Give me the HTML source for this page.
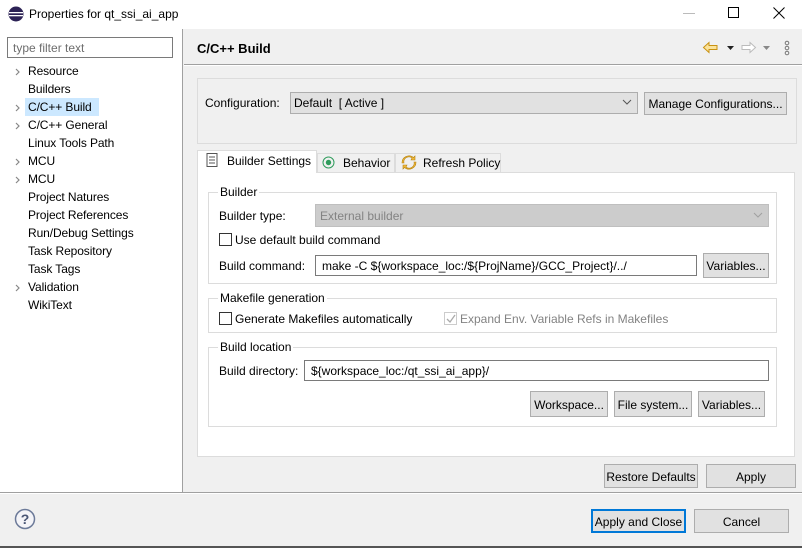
<!DOCTYPE html>
<html><head><style>
*{box-sizing:border-box;margin:0;padding:0}
body{width:802px;height:548px;background:#f0f0f0;font-family:"Liberation Sans",sans-serif;font-size:12px;color:#000;position:relative;overflow:hidden}
.a{position:absolute;white-space:nowrap}
.btn{position:absolute;background:#e1e1e1;border:1px solid #adadad;text-align:center;font-size:12px}
.grp{position:absolute;border:1px solid #dcdcdc}
.lg{position:absolute;background:#fff;padding:0 2px;top:-8px;left:8px}
.cb{position:absolute;width:13px;height:13px;border:1px solid #333;background:#fff}
.inp{position:absolute;background:#fff;border:1px solid #7a7a7a;padding-left:6px}
.tree div{position:absolute;left:28px;letter-spacing:-0.1px}
.arr{position:absolute;left:14px}
</style></head><body>
<div class="a" style="left:0;top:0;width:802px;height:29px;background:#fff"></div>
<svg class="a" style="left:8px;top:6px" width="16" height="16"><circle cx="8" cy="8" r="7.5" fill="#2c2255"/><rect x="1" y="6" width="14" height="1.3" fill="#fff"/><rect x="1" y="9" width="14" height="1.3" fill="#fff"/></svg>
<div class="a" style="left:29px;top:7px">Properties for qt_ssi_ai_app</div>
<div class="a" style="left:683px;top:13px;width:12px;height:1px;background:#bbb"></div>
<div class="a" style="left:728px;top:7px;width:11px;height:11px;border:1px solid #000"></div>
<svg class="a" style="left:773px;top:7px" width="12" height="12"><path d="M0.5 0.5L11.5 11.5M11.5 0.5L0.5 11.5" stroke="#000" stroke-width="1"/></svg>

<div class="a" style="left:0;top:29px;width:183px;height:464px;background:#fff;border-right:1px solid #a0a0a0"></div>
<div class="a" style="left:7px;top:37px;width:166px;height:21px;border:1px solid #7a7a7a;background:#fff;color:#6d6d6d;padding:3px 5px">type filter text</div>
<div class="a" style="left:25px;top:98px;width:74px;height:18px;background:#cce8ff"></div>
<div class="tree">
<div style="top:64px">Resource</div>
<div style="top:82px">Builders</div>
<div style="top:100px">C/C++ Build</div>
<div style="top:118px">C/C++ General</div>
<div style="top:136px">Linux Tools Path</div>
<div style="top:154px">MCU</div>
<div style="top:172px">MCU</div>
<div style="top:190px">Project Natures</div>
<div style="top:208px">Project References</div>
<div style="top:226px">Run/Debug Settings</div>
<div style="top:244px">Task Repository</div>
<div style="top:262px">Task Tags</div>
<div style="top:280px">Validation</div>
<div style="top:298px">WikiText</div>
</div>
<svg class="a" style="left:14px;top:66px" width="8" height="240"><g fill="none" stroke="#888" stroke-width="1.2"><path d="M2 3l3 3-3 3"/><path d="M2 39l3 3-3 3"/><path d="M2 57l3 3-3 3"/><path d="M2 93l3 3-3 3"/><path d="M2 111l3 3-3 3"/><path d="M2 219l3 3-3 3"/></g></svg>

<div class="a" style="left:197px;top:41px;font-size:13px;font-weight:bold">C/C++ Build</div>
<div class="a" style="left:184px;top:64px;width:618px;height:1px;background:#a0a0a0"></div>
<div class="a" style="left:184px;top:65px;width:618px;height:1px;background:#fff"></div>
<svg class="a" style="left:702px;top:40px" width="90" height="16"><path d="M1.5 7.5L7 2.5V5.5H15V9.5H7V12.5Z" fill="#fbe39a" stroke="#c99212"/><path d="M25 6h7l-3.5 4z" fill="#222"/><path d="M53.5 7.5L48 2.5V5.5H40V9.5H48V12.5Z" fill="#fff" stroke="#bbb"/><path d="M61 6h7l-3.5 4z" fill="#888"/><circle cx="85" cy="3" r="1.8" fill="none" stroke="#777"/><circle cx="85" cy="8" r="1.8" fill="none" stroke="#777"/><circle cx="85" cy="13" r="1.8" fill="none" stroke="#777"/></svg>

<div class="grp" style="left:197px;top:78px;width:600px;height:66px"></div>
<div class="a" style="left:205px;top:96px">Configuration:</div>
<div class="a" style="left:290px;top:92px;width:348px;height:22px;background:#e1e1e1;border:1px solid #adadad;padding:3px 3px">Default&nbsp; [ Active ]</div>
<svg class="a" style="left:622px;top:99px" width="10" height="6"><path d="M1 1l4 4 4-4" fill="none" stroke="#555"/></svg>
<div class="btn" style="left:644px;top:92px;width:143px;height:23px;padding-top:4px">Manage Configurations...</div>

<div class="a" style="left:197px;top:172px;width:598px;height:285px;background:#fff;border:1px solid #dcdcdc"></div>
<div class="a" style="left:197px;top:150px;width:120px;height:23px;background:#fff;border:1px solid #dcdcdc;border-bottom:none"></div>
<div class="a" style="left:317px;top:153px;width:78px;height:19px;background:#f0f0f0;border:1px solid #dcdcdc;border-bottom:none"></div>
<div class="a" style="left:395px;top:153px;width:106px;height:19px;background:#f0f0f0;border:1px solid #dcdcdc;border-bottom:none"></div>
<svg class="a" style="left:206px;top:153px" width="12" height="14"><rect x="1" y="0.5" width="10" height="13" fill="#fff" stroke="#555"/><path d="M3 4h6M3 7h6M3 10h6" stroke="#555"/></svg>
<div class="a" style="left:227px;top:154px">Builder Settings</div>
<svg class="a" style="left:322px;top:156px" width="13" height="13"><circle cx="6.5" cy="6.5" r="5.5" fill="none" stroke="#2f9c5c"/><circle cx="6.5" cy="6.5" r="2.7" fill="#2f9c5c"/></svg>
<div class="a" style="left:343px;top:156px">Behavior</div>
<svg class="a" style="left:401px;top:155px" width="16" height="15"><path d="M3 8a5 5 0 0 1 8-5l-1 2h4V1l-1.5 1.5A7 7 0 0 0 1 8z" fill="#f0b83c" stroke="#b5830f" stroke-width=".6"/><path d="M13 7a5 5 0 0 1-8 5l1-2H2v4l1.5-1.5A7 7 0 0 0 15 7z" fill="#f0b83c" stroke="#b5830f" stroke-width=".6"/></svg>
<div class="a" style="left:423px;top:156px">Refresh Policy</div>

<div class="grp" style="left:208px;top:192px;width:569px;height:92px"><span class="lg" style="left:9px;top:-8px">Builder</span></div>
<div class="a" style="left:219px;top:209px">Builder type:</div>
<div class="a" style="left:315px;top:204px;width:454px;height:23px;background:#cccccc;border:1px solid #bfbfbf;color:#838383;padding:4px 4px">External builder</div>
<svg class="a" style="left:753px;top:212px" width="10" height="6"><path d="M1 1l4 4 4-4" fill="none" stroke="#a0a0a0"/></svg>
<div class="cb" style="left:219px;top:233px"></div>
<div class="a" style="left:235px;top:233px">Use default build command</div>
<div class="a" style="left:219px;top:259px">Build command:</div>
<div class="inp" style="left:315px;top:255px;width:382px;height:21px;padding-top:3px">make -C ${workspace_loc:/${ProjName}/GCC_Project}/../</div>
<div class="btn" style="left:703px;top:253px;width:66px;height:25px;padding-top:5px">Variables...</div>

<div class="grp" style="left:208px;top:298px;width:569px;height:35px"><span class="lg" style="left:9px">Makefile generation</span></div>
<div class="cb" style="left:219px;top:312px"></div>
<div class="a" style="left:235px;top:312px">Generate Makefiles automatically</div>
<div class="a" style="left:444px;top:312px;width:13px;height:13px;border:1px solid #ccc"></div>
<svg class="a" style="left:445px;top:313px" width="12" height="12"><path d="M2 6l3 3 5-7" fill="none" stroke="#aaa" stroke-width="1.3"/></svg>
<div class="a" style="left:460px;top:312px;color:#838383">Expand Env. Variable Refs in Makefiles</div>

<div class="grp" style="left:208px;top:347px;width:569px;height:80px"><span class="lg" style="left:9px">Build location</span></div>
<div class="a" style="left:219px;top:364px">Build directory:</div>
<div class="inp" style="left:304px;top:360px;width:465px;height:21px;padding-top:3px">${workspace_loc:/qt_ssi_ai_app}/</div>
<div class="btn" style="left:530px;top:391px;width:78px;height:26px;padding-top:6px">Workspace...</div>
<div class="btn" style="left:614px;top:391px;width:78px;height:26px;padding-top:6px">File system...</div>
<div class="btn" style="left:698px;top:391px;width:67px;height:26px;padding-top:6px">Variables...</div>

<div class="btn" style="left:604px;top:464px;width:94px;height:24px;padding-top:5px">Restore Defaults</div>
<div class="btn" style="left:706px;top:464px;width:90px;height:24px;padding-top:5px">Apply</div>

<div class="a" style="left:0;top:492px;width:802px;height:1px;background:#a0a0a0"></div>
<div class="a" style="left:0;top:493px;width:802px;height:1px;background:#fff"></div>
<svg class="a" style="left:14px;top:508px" width="22" height="22"><circle cx="11" cy="11" r="9.5" fill="#f4f4f8" stroke="#6c7a99" stroke-width="1.5"/><text x="11" y="16" text-anchor="middle" font-family="Liberation Sans" font-size="14" font-weight="bold" fill="#4a5675">?</text></svg>
<div class="btn" style="left:591px;top:509px;width:95px;height:24px;padding-top:4px;border:2px solid #0078d7">Apply and Close</div>
<div class="btn" style="left:694px;top:509px;width:95px;height:24px;padding-top:5px">Cancel</div>
<div class="a" style="left:0;top:546px;width:802px;height:2px;background:#555"></div>
</body></html>
